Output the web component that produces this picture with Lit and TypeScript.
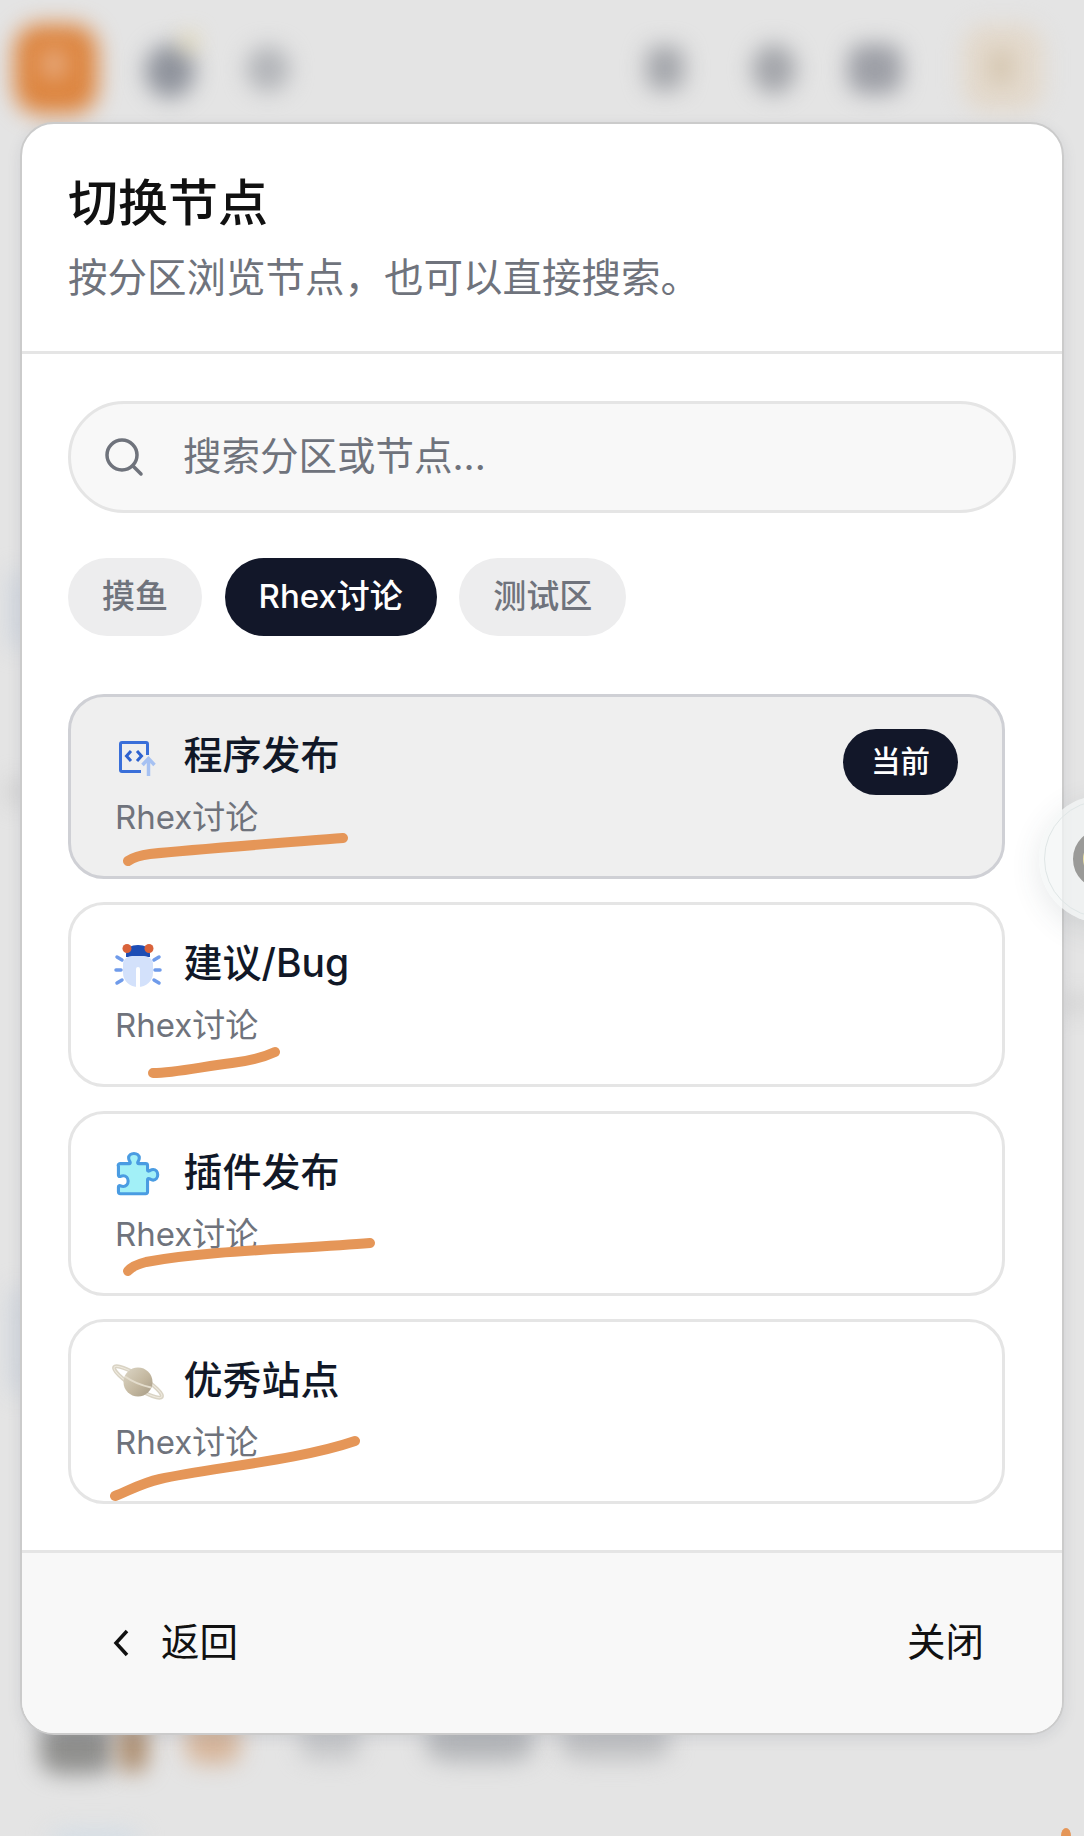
import { LitElement, html, css, svg } from 'lit';
import { customElement, state } from 'lit/decorators.js';

const SECTION = 'Rhex讨论';

const codeIcon = svg`
  <path d="M26 41.500H7a1.500 1.500 0 0 1-1.500-1.500V14A1.500 1.500 0 0 1 7 12.500h24a1.500 1.500 0 0 1 1.500 1.500v11" fill="none" stroke="#3a6fd9" stroke-width="3"/>
  <path d="M16 21l-4.500 5 4.500 5M22 21l4.500 5-4.500 5" fill="none" stroke="#2f63cf" stroke-width="3"/>
  <path d="M33.500 46V29M27.500 35l6-6.500 6 6.500" fill="none" stroke="#a6c1f2" stroke-width="3.500"/>`;

const bugIcon = svg`
  <g transform="translate(1 6)">
    <path d="M6 16l-5-3M5 26H0M6 36l-5 3M38 16l5-3M39 26h5M38 36l5 3" stroke="#6f9bea" stroke-width="3.500" stroke-linecap="round"/>
    <path d="M10 10c0-6 5-9 12-9s12 3 12 9v3H10z" fill="#1d4db5"/>
    <path d="M7 20c0-4 4-8 9-8h12c5 0 9 4 9 8v9c0 8-7 14-15 14S7 37 7 29z" fill="#d3e1fb"/>
    <path d="M20 43V25a2 2 0 0 1 4 0v18z" fill="#fff"/>
    <circle cx="11" cy="4.500" r="4.500" fill="#d9623a"/>
    <circle cx="33" cy="4.500" r="4.500" fill="#d9623a"/>
  </g>`;

const puzzleIcon = svg`
  <g transform="translate(1.500 5) scale(.97)">
    <path d="M4 12h9c1 0 1.500-.8 1-1.800-.8-1.400-1.500-2.400-1.500-4C12.500 3.500 15 1.500 18 1.500s5.500 2 5.500 4.700c0 1.600-.7 2.600-1.500 4-.5 1 0 1.800 1 1.800h7a2 2 0 0 1 2 2v4.500c0 1 .8 1.500 1.800 1 1.400-.8 2.400-1.500 4-1.500 2.700 0 4.700 2.500 4.700 5.500s-2 5.500-4.700 5.500c-1.600 0-2.600-.7-4-1.500-1-.5-1.800 0-1.800 1V41a2 2 0 0 1-2 2H4a2 2 0 0 1-2-2v-5c0-1 .8-1.500 1.800-1.200 1.300.5 2 .7 3.200.7 2.800 0 5-2.400 5-5.500s-2.200-5.500-5-5.500c-1.200 0-1.900.2-3.200.7-1 .3-1.800-.2-1.800-1.200v-9A2 2 0 0 1 4 12z" fill="#a2f0f7" stroke="#4a9ce2" stroke-width="3.200"/>
  </g>`;

const saturnIcon = svg`
  <defs>
    <linearGradient id="planet" x1="0" y1="0" x2="1" y2="1">
      <stop offset="0" stop-color="#dcd6c6"/>
      <stop offset=".55" stop-color="#c4b8a0"/>
      <stop offset="1" stop-color="#a59a85"/>
    </linearGradient>
  </defs>
  <g transform="translate(2 11)">
    <ellipse cx="21" cy="16" rx="28" ry="6" transform="rotate(32 21 16)" fill="none" stroke="#d9d3c4" stroke-width="4"/>
    <ellipse cx="21" cy="16" rx="28" ry="6" transform="rotate(32 21 16)" fill="none" stroke="#efeadf" stroke-width="1"/>
    <circle cx="21" cy="16" r="14.500" fill="url(#planet)"/>
    <path d="M8 10.500c7 5 17 9 26 11" fill="none" stroke="#e4ddcd" stroke-width="2"/>
  </g>`;

const NODES = [
  { name: '程序发布', icon: codeIcon, active: true },
  { name: '建议/Bug', icon: bugIcon, active: false },
  { name: '插件发布', icon: puzzleIcon, active: false },
  { name: '优秀站点', icon: saturnIcon, active: false },
];

// pen marks somebody drew over the screenshot
const SCRIBBLES = [
  'M128 861C134 857 142 855 150 854C200 849 280 843 343 838',
  'M153 1073C175 1073 205 1066 232 1063C250 1061 262 1058 275 1052',
  'M128 1271C132 1266 138 1264 146 1262C210 1250 300 1249 370 1243',
  'M115 1496C130 1490 142 1483 160 1479C210 1468 300 1460 355 1441',
];

@customElement('app-root')
export class AppRoot extends LitElement {
  static styles = css`
    :host {
      display: block;
      position: relative;
      width: 1084px;
      height: 1836px;
      overflow: hidden;
      background: #e4e4e4;
      font-family: Inter, 'Noto Sans CJK SC', sans-serif;
      color: #111827;
    }

    * {
      box-sizing: border-box;
    }

    /* Blurred page behind the dialog */
    .backdrop {
      position: absolute;
      inset: 0;
    }

    .blob {
      position: absolute;
      filter: blur(11px);
      border-radius: 30%;
    }

    .logo { left: 14px; top: 24px; width: 84px; height: 90px; background: #dd853f; }
    .logo-mark { left: 42px; top: 50px; width: 24px; height: 28px; background: #e8ae84; }
    .bell { left: 145px; top: 44px; width: 50px; height: 54px; background: #8f939c; border-radius: 50%; }
    .bell-dot { left: 182px; top: 34px; width: 14px; height: 16px; background: #e8d698; border-radius: 50%; }
    .find { left: 246px; top: 46px; width: 44px; height: 46px; background: #b3b5b9; border-radius: 50%; }
    .act-a { left: 646px; top: 46px; width: 38px; height: 44px; background: #a4a6ab; }
    .act-b { left: 752px; top: 44px; width: 44px; height: 50px; background: #a3a5aa; border-radius: 50%; }
    .act-c { left: 848px; top: 44px; width: 54px; height: 50px; background: #9d9fa6; }
    .avatar { left: 962px; top: 24px; width: 82px; height: 88px; background: #e3d9cc; }
    .avatar-mark { left: 990px; top: 50px; width: 22px; height: 34px; background: #d4c5ae; }

    .foot-a { left: 40px; top: 1722px; width: 74px; height: 52px; background: #8f8f8d; }
    .foot-b { left: 118px; top: 1722px; width: 30px; height: 50px; background: #ab8c6e; }
    .foot-c { left: 186px; top: 1722px; width: 54px; height: 42px; background: #d6b59a; }
    .foot-d { left: 300px; top: 1722px; width: 60px; height: 38px; background: #c6c7c9; }
    .foot-e { left: 426px; top: 1722px; width: 108px; height: 40px; background: #b4b6b9; }
    .foot-f { left: 560px; top: 1722px; width: 110px; height: 38px; background: #bfc0c2; }
    .foot-g { left: 50px; top: 1830px; width: 90px; height: 20px; background: #d3dde6; }
    .edge-a { left: 10px; top: 570px; width: 14px; height: 80px; background: #c9d1dc; }
    .edge-b { left: 10px; top: 778px; width: 12px; height: 28px; background: #c6c6c6; }
    .edge-c { left: 10px; top: 1286px; width: 14px; height: 110px; background: #cad1db; }
    .edge-d { left: 1058px; top: 996px; width: 40px; height: 16px; background: #d2d2d2; }

    /* Dialog */
    .frame {
      position: relative;
      padding: 122px 20px 0;
    }

    .modal {
      display: flex;
      flex-direction: column;
      height: 1613px;
      background: #fff;
      border: 2.500px solid #cbcbcb;
      border-radius: 34px;
      overflow: hidden;
      box-shadow: 0 4px 14px rgba(90, 100, 120, 0.14);
    }

    .header {
      height: 230px;
      padding: 51px 46px 0;
      border-bottom: 3px solid #e5e5e5;
    }

    .title {
      margin: 0;
      font-size: 50px;
      line-height: 56px;
      font-weight: 500;
      color: #111;
    }

    .subtitle {
      margin: 22px 0 0;
      font-size: 39.500px;
      line-height: 50px;
      color: #6f737c;
    }

    .body {
      flex: 1;
      padding: 47px 46px 0;
    }

    .search {
      display: flex;
      align-items: center;
      gap: 39px;
      height: 112px;
      padding: 0 33px;
      background: #f8f8f8;
      border: 3px solid #e5e5e5;
      border-radius: 56px;
      font-size: 38.500px;
      color: #6f737c;
    }

    .search span {
      margin-bottom: 8px;
    }

    .search svg {
      flex: none;
      width: 40px;
      height: 40px;
    }

    .tabs {
      display: flex;
      gap: 22.500px;
      margin-top: 45px;
    }

    .tab {
      display: flex;
      align-items: center;
      height: 78px;
      padding: 0 34px 7px;
      border-radius: 39px;
      background: #ededee;
      color: #6f737c;
      font-size: 33px;
      font-weight: 500;
    }

    .tab.on {
      background: #121729;
      color: #fff;
    }

    .list {
      display: flex;
      flex-direction: column;
      gap: 23.300px;
      width: 937px;
      margin-top: 58px;
    }

    .card {
      display: flex;
      justify-content: space-between;
      height: 185px;
      padding: 33px 44px 0;
      border: 3px solid #e5e5e5;
      border-radius: 36px;
      background: #fff;
    }

    .card.current {
      border-color: #cfd0d5;
      background: #efefef;
    }

    .row {
      display: flex;
      align-items: center;
      gap: 20.500px;
      height: 50px;
    }

    .row svg {
      flex: none;
      width: 48px;
      height: 48px;
      overflow: visible;
    }

    .name {
      font-size: 39px;
      line-height: 50px;
      font-weight: 500;
    }

    .section {
      margin-top: 15px;
      font-size: 33px;
      line-height: 44px;
      color: #6f737c;
    }

    .badge {
      display: flex;
      align-items: center;
      height: 66px;
      margin-top: -1px;
      padding: 0 28px 6px;
      border-radius: 33px;
      background: #121729;
      color: #fff;
      font-size: 29.500px;
      font-weight: 500;
    }

    .footer {
      display: flex;
      align-items: center;
      justify-content: space-between;
      height: 183px;
      padding: 0 78px 0 90px;
      background: #f8f8f8;
      border-top: 3px solid #e5e5e5;
      font-size: 38.500px;
      color: #111;
    }

    .footer span span,
    .close {
      margin-bottom: 9px;
    }

    .back {
      display: flex;
      align-items: center;
      gap: 31px;
    }

    .back svg {
      width: 18px;
      height: 28px;
    }

    /* Floating assistant button, half off the page */
    .float {
      position: absolute;
      left: 1039px;
      top: 795px;
      width: 128px;
      height: 128px;
      padding: 5px;
      border-radius: 50%;
      background: rgba(243, 246, 246, 0.74);
      box-shadow: 0 8px 30px rgba(60, 70, 80, 0.12);
    }

    .float-inner {
      display: flex;
      align-items: center;
      justify-content: center;
      height: 100%;
      border: 1px solid #dfe6e6;
      border-radius: 50%;
    }

    .float-dot {
      width: 60px;
      height: 60px;
      border: 10px solid #9a9a98;
      border-radius: 50%;
      background: #e9e0a4;
    }

    .pen {
      position: absolute;
      inset: 0;
      width: 1084px;
      height: 1836px;
      pointer-events: none;
    }

    .pen path {
      fill: none;
      stroke: #e59658;
      stroke-width: 10px;
      stroke-linecap: round;
      stroke-linejoin: round;
    }

    .pen .fleck {
      fill: #e59658;
      stroke: none;
    }
  `;

  @state()
  private _tab = 1;

  private _tabs = ['摸鱼', SECTION, '测试区'];

  private _blobs = [
    'logo', 'logo-mark', 'bell', 'bell-dot', 'find', 'act-a', 'act-b', 'act-c',
    'avatar', 'avatar-mark', 'foot-a', 'foot-b', 'foot-c', 'foot-d', 'foot-e',
    'foot-f', 'foot-g', 'edge-a', 'edge-b', 'edge-c', 'edge-d',
  ];

  render() {
    return html`
      <div class="backdrop">
        ${this._blobs.map((b) => html`<div class="blob ${b}"></div>`)}
      </div>

      <div class="frame">
        <div class="modal">
          <div class="header">
            <h2 class="title">切换节点</h2>
            <p class="subtitle">按分区浏览节点，也可以直接搜索。</p>
          </div>

          <div class="body">
            <div class="search">
              <svg viewBox="0 0 40 40" fill="none" stroke="#6f737c" stroke-width="3.500" stroke-linecap="round">
                <circle cx="18" cy="18" r="15"/>
                <path d="M29 29l8 8"/>
              </svg>
              <span>搜索分区或节点...</span>
            </div>

            <div class="tabs">
              ${this._tabs.map((t, i) => html`
                <div class="tab ${i === this._tab ? 'on' : ''}">${t}</div>
              `)}
            </div>

            <div class="list">
              ${NODES.map((n) => html`
                <div class="card ${n.active ? 'current' : ''}">
                  <div>
                    <div class="row">
                      <svg viewBox="0 1 48 48">${n.icon}</svg>
                      <span class="name">${n.name}</span>
                    </div>
                    <div class="section">${SECTION}</div>
                  </div>
                  ${n.active ? html`<span class="badge">当前</span>` : ''}
                </div>
              `)}
            </div>
          </div>

          <div class="footer">
            <span class="back">
              <svg viewBox="0 0 18 28" fill="none" stroke="#111" stroke-width="3.500">
                <path d="M15 2L4 14l11 12"/>
              </svg>
              <span>返回</span>
            </span>
            <span class="close">关闭</span>
          </div>
        </div>
      </div>

      <div class="float">
        <div class="float-inner"><div class="float-dot"></div></div>
      </div>

      <svg class="pen" viewBox="0 0 1084 1836">
        ${SCRIBBLES.map((d) => svg`<path d=${d}></path>`)}
        <ellipse class="fleck" cx="1066" cy="1836" rx="5" ry="8"></ellipse>
      </svg>
    `;
  }
}

declare global {
  interface HTMLElementTagNameMap {
    'app-root': AppRoot;
  }
}
